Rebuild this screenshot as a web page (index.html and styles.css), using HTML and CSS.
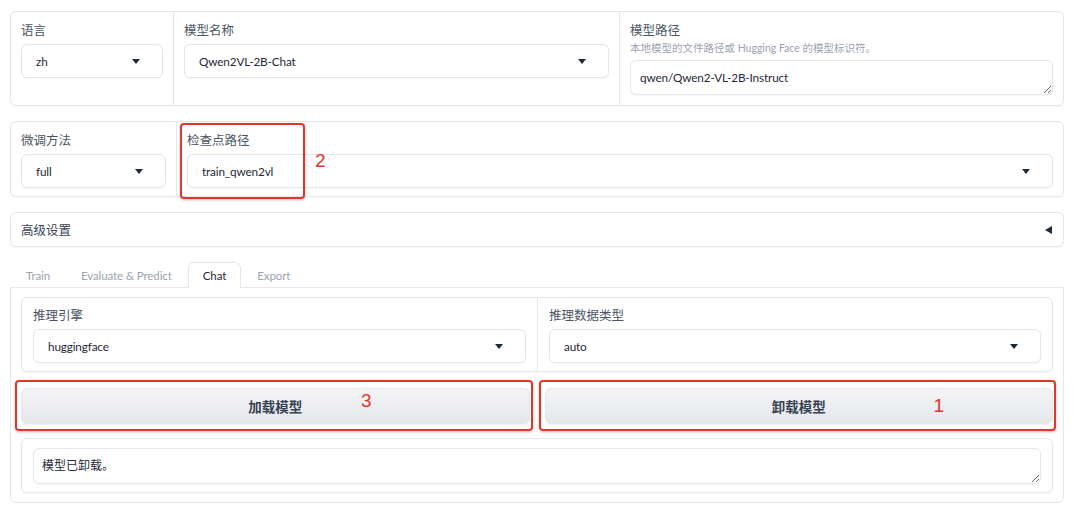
FILE: index.html
```html
<!DOCTYPE html>
<html lang="zh">
<head>
<meta charset="utf-8">
<title>LLaMA Board</title>
<link rel="stylesheet" href="styles.css">
</head>
<body>
<div class="page">
  <div class="block top-row">
    <div class="col">
      <div class="lbl">语言</div>
      <div class="select"><span>zh</span><i class="caret"></i></div>
    </div>
    <div class="col">
      <div class="lbl">模型名称</div>
      <div class="select"><span>Qwen2VL-2B-Chat</span><i class="caret"></i></div>
    </div>
    <div class="col">
      <div class="lbl">模型路径</div>
      <div class="desc">本地模型的文件路径或 Hugging Face 的模型标识符。</div>
      <textarea class="ta ta-path" readonly>qwen/Qwen2-VL-2B-Instruct</textarea>
    </div>
  </div>

  <div class="block second-row">
    <div class="col">
      <div class="lbl">微调方法</div>
      <div class="select"><span>full</span><i class="caret"></i></div>
    </div>
    <div class="col col-ckpt">
      <div class="lbl">检查点路径</div>
      <div class="select"><span>train_qwen2vl</span><i class="caret"></i></div>
      <div class="anno anno-ckpt"></div>
      <div class="num num-2">2</div>
    </div>
  </div>

  <div class="block accordion">
    <span class="acc-label">高级设置</span>
    <i class="acc-caret"></i>
  </div>

  <div class="tabs">
    <div class="tab">Train</div>
    <div class="tab">Evaluate &amp; Predict</div>
    <div class="tab active">Chat</div>
    <div class="tab">Export</div>
  </div>
  <div class="tab-panel">
    <div class="block infer-row">
      <div class="col">
        <div class="lbl">推理引擎</div>
        <div class="select"><span>huggingface</span><i class="caret"></i></div>
      </div>
      <div class="col">
        <div class="lbl">推理数据类型</div>
        <div class="select"><span>auto</span><i class="caret"></i></div>
      </div>
    </div>
    <div class="btn-row">
      <div class="btn-wrap">
        <button class="btn">加载模型</button>
        <div class="anno anno-btn"></div>
        <div class="num num-3">3</div>
      </div>
      <div class="btn-wrap">
        <button class="btn">卸载模型</button>
        <div class="anno anno-btn"></div>
        <div class="num num-1">1</div>
      </div>
    </div>
    <div class="block output">
      <textarea class="ta ta-out" readonly>模型已卸载。</textarea>
    </div>
  </div>
</div>
</body>
</html>
```

FILE: styles.css
```css
* { box-sizing: border-box; }
html, body {
  margin: 0;
  padding: 0;
  background: #ffffff;
}
body {
  font-family: Lato, "Noto Sans", "Noto Sans CJK SC", sans-serif;
  color: #1f2937;
  font-size: 13px;
}
.page {
  width: 1080px;
  padding: 11px 16px 0 10px;
}
.block {
  background: #ffffff;
  border: 1px solid #e5e7eb;
  border-radius: 6px;
  box-shadow: 0 1px 2px rgba(0,0,0,0.04);
}
.top-row {
  display: grid;
  grid-template-columns: 162px 446px 1fr;
  height: 95px;
}
.second-row {
  display: grid;
  grid-template-columns: 165px 1fr;
  height: 76px;
  margin-top: 15px;
}
.col {
  padding: 9px 10px 8px 10px;
  display: flex;
  flex-direction: column;
  position: relative;
}
.col + .col {
  border-left: 1px solid #e5e7eb;
}
.lbl {
  font-family: "Noto Sans CJK SC", sans-serif;
  font-size: 12.5px;
  line-height: 17px;
  color: #4b5563;
  margin-bottom: 6px;
}
.desc {
  font-family: Lato, "Noto Sans CJK SC", sans-serif;
  font-size: 10.5px;
  line-height: 14px;
  color: #9ca3af;
  margin-top: -3px;
  margin-bottom: 5px;
}
.select {
  height: 34px;
  border: 1px solid #e5e7eb;
  border-radius: 6px;
  background: #ffffff;
  box-shadow: 0 1px 2px rgba(0,0,0,0.04);
  display: flex;
  align-items: center;
  justify-content: space-between;
  padding: 0 22px 0 14px;
  font-size: 11.75px;
  letter-spacing: -0.15px;
  color: #1f2937;
}
.caret {
  width: 0;
  height: 0;
  border-left: 4.5px solid transparent;
  border-right: 4.5px solid transparent;
  border-top: 5px solid #1f2937;
}
.ta {
  display: block;
  width: 100%;
  border: 1px solid #e5e7eb;
  border-radius: 6px;
  background: #ffffff;
  box-shadow: 0 1px 2px rgba(0,0,0,0.04);
  font-family: Lato, "Noto Sans CJK SC", sans-serif;
  font-size: 11.75px;
  letter-spacing: -0.15px;
  color: #1f2937;
  outline: none;
  resize: vertical;
  overflow: hidden;
}
.ta-path {
  height: 35px;
  padding: 9px 9px;
  line-height: 16px;
}
.anno {
  position: absolute;
  border: 2px solid #e2352d;
  border-radius: 4px;
  box-shadow: 0 1px 3px rgba(0,0,0,0.25);
  pointer-events: none;
}
.anno-ckpt {
  left: 3px;
  top: 1px;
  width: 125px;
  height: 76px;
}
.num {
  position: absolute;
  color: #e2352d;
  font-family: "Liberation Sans", Arial, sans-serif;
  font-size: 19px;
  line-height: 20px;
}
.num-2 { left: 138px; top: 29px; }

.accordion {
  margin-top: 15px;
  height: 35px;
  display: flex;
  align-items: center;
  justify-content: space-between;
  padding: 0 11px 0 10px;
}
.acc-label {
  font-family: "Noto Sans CJK SC", sans-serif;
  font-size: 12.5px;
  color: #374151;
}
.acc-caret {
  width: 0;
  height: 0;
  border-top: 4px solid transparent;
  border-bottom: 4px solid transparent;
  border-right: 7px solid #1f2937;
}

.tabs {
  display: flex;
  gap: 1px;
  margin-top: 15px;
  padding-left: 1px;
  height: 26px;
  position: relative;
  z-index: 1;
}
.tab {
  padding: 0 14px;
  line-height: 25px;
  font-size: 11.5px;
  letter-spacing: -0.1px;
  color: #9ca3af;
  border: 1px solid transparent;
  border-bottom: none;
  border-radius: 6px 6px 0 0;
}
.tab.active {
  color: #1f2937;
  border-color: #e5e7eb;
  background: #ffffff;
  height: 26px;
}
.tab-panel {
  border: 1px solid #e5e7eb;
  border-radius: 0 0 6px 6px;
  margin-top: -1px;
  padding: 9px 10px 9px 10px;
  height: 216px;
}
.infer-row {
  display: grid;
  grid-template-columns: 515px 1fr;
  height: 75px;
}
.infer-row .col {
  padding: 8px 11px 8px 11px;
}
.btn-row {
  display: grid;
  grid-template-columns: 1fr 1fr;
  gap: 15px;
  margin-top: 16px;
}
.btn-wrap {
  position: relative;
}
.btn {
  display: block;
  width: 100%;
  height: 36px;
  border: 1px solid #e5e7eb;
  border-radius: 6px;
  background: linear-gradient(to bottom, #f4f4f6, #e5e7eb);
  box-shadow: 0 1px 2px rgba(0,0,0,0.06);
  font-family: "Noto Sans CJK SC", sans-serif;
  font-weight: 700;
  font-size: 13.5px;
  color: #374151;
}
.anno-btn {
  left: -6px;
  right: -3px;
  top: -8px;
  bottom: -7px;
}
.num-3 { left: 340px; top: 3px; }
.num-1 { left: 389px; top: 8px; }

.output {
  margin-top: 14px;
  height: 55px;
  padding: 9px 11px;
}
.ta-out {
  height: 36px;
  padding: 9px 8px;
  line-height: 16px;
  font-size: 12px;
  letter-spacing: 0;
}
```
